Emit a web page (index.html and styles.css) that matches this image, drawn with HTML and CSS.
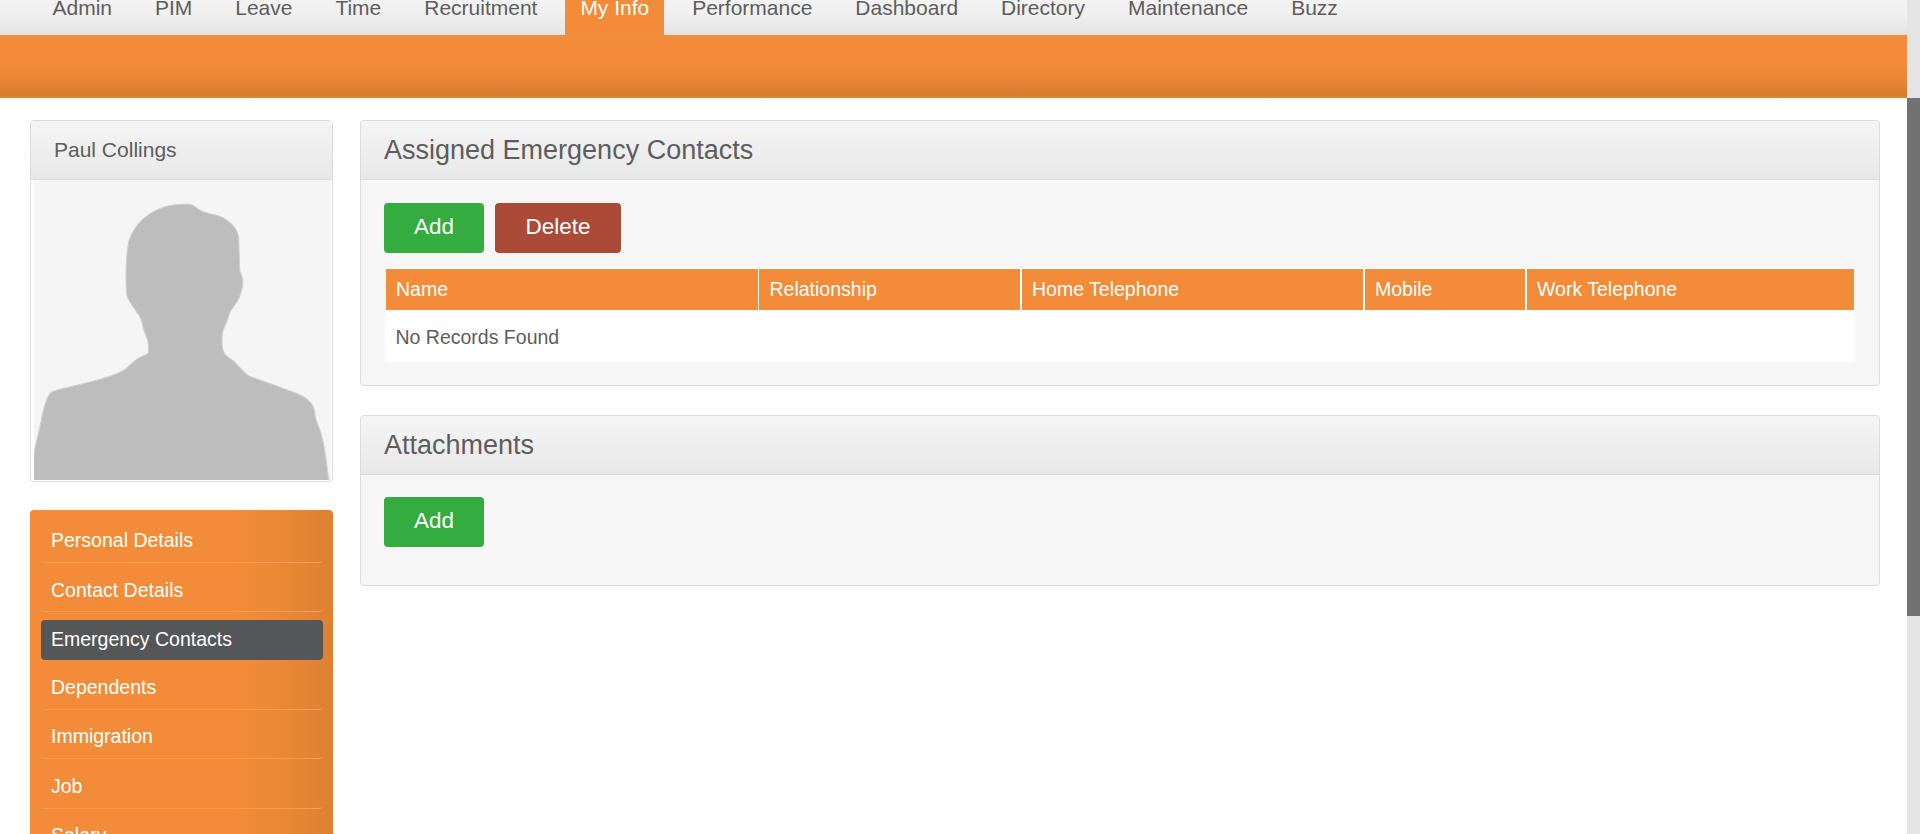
FILE: index.html
```html
<!DOCTYPE html>
<html lang="en">
<head>
<meta charset="utf-8">
<title>Emergency Contacts</title>
<link rel="stylesheet" href="styles.css">
</head>
<body>
<div class="page">
  <header>
    <nav class="menu">
      <a class="menu-item">Admin</a><a class="menu-item">PIM</a><a class="menu-item">Leave</a><a class="menu-item">Time</a><a class="menu-item">Recruitment</a><a class="menu-item current">My Info</a><a class="menu-item">Performance</a><a class="menu-item">Dashboard</a><a class="menu-item">Directory</a><a class="menu-item">Maintenance</a><a class="menu-item">Buzz</a>
    </nav>
    <div class="submenu"></div>
  </header>
  <div class="content">
    <aside class="sidebar">
      <section class="box profile">
        <h1 class="head name">Paul Collings</h1>
        <svg class="photo" viewBox="102 240 890 900" preserveAspectRatio="none">
          <rect x="102" y="240" width="890" height="900" fill="#f5f5f5"/>
          <path fill="#bdbdbd" stroke="#d0d0d0" stroke-width="3" d="M100 1144V1075C106 1030 118 995 126 950C134 910 142 892 150 880C156 873 170 871 180 868L270 846C310 836 345 826 372 810C390 798 400 783 414 775C428 767 440 765 445 758V735C443 710 432 700 429 683C425 660 421 648 410 637C399 618 383 601 380 585C377 560 377 500 380 470C383 430 387 414 400 393C420 355 458 335 478 326C505 315 530 311 568 313C583 314 588 327 605 334C630 344 655 344 675 357C695 370 712 386 715 412C717 440 717 490 719 512C721 524 727 525 728 541C728 560 723 578 716 595C707 615 692 628 687 642C683 665 668 685 666 705C664 730 664 748 674 763C683 773 692 775 702 785C718 800 732 820 748 829L830 858C860 870 890 879 908 889C930 902 941 917 943 935C944 965 960 985 965 1010C975 1050 979 1095 986 1144Z"/>
        </svg>
      </section>
      <ul class="sidenav">
        <li>Personal Details</li>
        <li>Contact Details</li>
        <li class="selected">Emergency Contacts</li>
        <li>Dependents</li>
        <li>Immigration</li>
        <li>Job</li>
        <li>Salary</li>
      </ul>
    </aside>
    <main class="main">
      <section class="box">
        <h2 class="head">Assigned Emergency Contacts</h2>
        <div class="inner contacts">
          <div class="actions"><button class="btn">Add</button><button class="btn delete">Delete</button></div>
          <div class="table">
            <div class="thead"><span>Name</span><span>Relationship</span><span>Home Telephone</span><span>Mobile</span><span>Work Telephone</span></div>
            <div class="empty">No Records Found</div>
          </div>
        </div>
      </section>
      <section class="box">
        <h2 class="head">Attachments</h2>
        <div class="inner attachments">
          <div class="actions"><button class="btn">Add</button></div>
        </div>
      </section>
    </main>
  </div>
</div>
<div class="scrollbar"><div class="thumb"></div></div>
</body>
</html>
```
FILE: styles.css
```css
* { box-sizing: border-box; }
body {
  margin: 0;
  height: 834px;
  overflow: hidden;
  display: flex;
  background: #fff;
  color: #5d5d5d;
  font-family: "Liberation Sans", Arial, sans-serif;
  font-size: 19.5px;
}
.page { flex: 1; min-width: 0; height: 834px; overflow: hidden; }
.scrollbar { width: 13px; background: #e4e4e4; padding-top: 98px; }
.thumb { height: 518px; background: #727272; }

.menu {
  display: flex;
  height: 35px;
  padding-left: 37.5px;
  background: linear-gradient(#f3f3f3, #f0f0f0 40%, #e5e5e5);
  border-bottom: 1px solid #dcdcdc;
  font-size: 21px;
  line-height: 24px;
}
.menu-item { height: 35px; padding: 0 15px; margin-right: 12.95px; margin-top: -4px; }
.menu-item.current { height: 39px; background: #f38c38; color: #fff; }
.submenu {
  height: 63px;
  background: linear-gradient(#ee8f40, #f38c38 10%, #f38c38 42%, #e88735 70%, #d97c30 96%, #db8741);
}

.content { display: flex; gap: 27px; padding: 22px 28px 0 30px; }
.sidebar { width: 303px; flex: none; }
.main { flex: 1; }
.box { border: 1px solid #dcdcdc; border-radius: 4px; background: #f6f6f6; overflow: hidden; }
.head {
  margin: 0;
  height: 59px;
  padding-left: 23px;
  border-bottom: 1px solid #dcdcdc;
  background: linear-gradient(#f5f5f5, #e8e8e8);
  font-size: 27px;
  font-weight: 400;
  line-height: 58px;
}
.name { font-size: 21px; }
.profile { height: 362px; margin-bottom: 28px; background: #fff; }
.photo { display: block; width: 297px; height: 300px; margin-left: 2.5px; }

.sidenav {
  margin: 0;
  height: 420px;
  padding: 13px 10px 0 11px;
  list-style: none;
  border-radius: 4px;
  background: linear-gradient(90deg, #f38c38 66%, #eb8936 82%, #e08233 96%, #de8131);
  color: #fff;
}
.sidenav li {
  height: 40px;
  margin-bottom: 9.2px;
  padding-left: 10px;
  border-bottom: 1px solid #f59c54;
  border-radius: 4px;
  line-height: 35px;
}
.sidenav li:nth-child(2) { margin-bottom: 8px; line-height: 36px; }
.sidenav .selected { margin-bottom: 10px; border: 0; background: #555658; line-height: 38px; }

.inner { padding: 23px 24px 0 23px; }
.contacts { height: 205px; }
.main .box + .box { margin-top: 29px; }
.attachments { height: 110px; padding-top: 22px; }
.actions { display: flex; gap: 11px; }
.btn {
  width: 100px;
  height: 50px;
  padding: 0 0 2px;
  border: 0;
  border-radius: 4px;
  background: #34ac40;
  color: #fff;
  font: 22.5px "Liberation Sans", Arial, sans-serif;
}
.btn.delete { width: 126px; background: #aa4a37; }
.table { margin: 15px 0 0 1px; background: #fff; }
.thead {
  display: grid;
  grid-template-columns: 372px 260px 341px 160px 327px;
  column-gap: 2px;
  padding: 1px 1px 0;
  color: #fff;
  line-height: 40px;
}
.thead span { height: 41px; padding-left: 10px; background: #f38c38; }
.thead span:nth-child(2) { margin-left: -1px; padding-left: 10.5px; }
.empty { height: 52px; padding-left: 10.5px; line-height: 54px; }
```
